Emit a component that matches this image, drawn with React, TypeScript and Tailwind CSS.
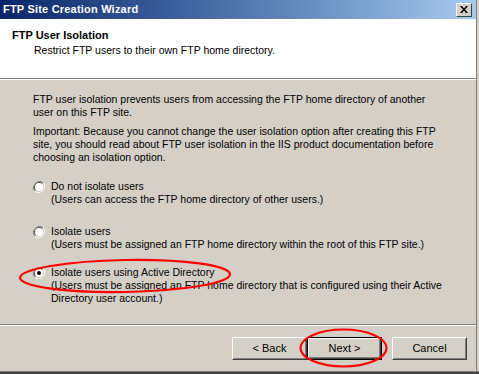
import React from "react";

const font = { fontFamily: '"Liberation Sans", Arial, sans-serif' };

function Radio({ checked }: { checked?: boolean }) {
  return (
    <svg width="12" height="12" viewBox="0 0 12 12" className="shrink-0">
      <path d="M10.2 1.8 A6 6 0 0 0 1.8 10.2" fill="none" stroke="#808080" strokeWidth="1" />
      <path d="M9.5 2.5 A5 5 0 0 0 2.5 9.5" fill="none" stroke="#404040" strokeWidth="1" />
      <path d="M1.8 10.2 A6 6 0 0 0 10.2 1.8" fill="none" stroke="#ffffff" strokeWidth="1" />
      <path d="M2.5 9.5 A5 5 0 0 0 9.5 2.5" fill="none" stroke="#d4d0c8" strokeWidth="1" />
      <circle cx="6" cy="6" r="4" fill="#ffffff" />
      {checked && <circle cx="6" cy="6" r="2" fill="#000000" />}
    </svg>
  );
}

function Btn({ label, def }: { label: string; def?: boolean }) {
  return (
    <div className={`w-[75px] h-[23px] ${def ? "border border-black" : ""}`}>
      <div className="w-full h-full border border-t-white border-l-white border-b-[#404040] border-r-[#404040]">
        <div className="w-full h-full border border-t-[#d4d0c8] border-l-[#d4d0c8] border-b-[#808080] border-r-[#808080] flex items-center justify-center text-[11px] text-black">
          {label}
        </div>
      </div>
    </div>
  );
}

export default function App() {
  return (
    <div className="relative w-[479px] h-[374px] overflow-hidden bg-[#d4d0c8] text-black" style={font}>
      <div className="flex flex-col w-[476px] h-[371px]">
        {/* Title bar */}
        <div className="h-[19px] shrink-0 flex items-center justify-between pl-[3px] pr-[4px] bg-gradient-to-r from-[#0a246a] to-[#a6caf0]">
          <span className="text-white font-bold text-[11px] leading-none tracking-[0.2px]">FTP Site Creation Wizard</span>
          <div className="w-[16px] h-[14px] bg-[#d4d0c8] border border-t-white border-l-white border-b-[#404040] border-r-[#404040] flex items-center justify-center">
            <svg width="8" height="7" viewBox="0 0 8 7">
              <path d="M0 0h2l2 2.5L6 0h2L5 3.5 8 7H6L4 4.5 2 7H0l3-3.5z" fill="#000" />
            </svg>
          </div>
        </div>
        {/* Header */}
        <div className="h-[59px] shrink-0 bg-white pl-[12px] pt-[10px]">
          <div className="text-[11px] font-bold leading-[13px]">FTP User Isolation</div>
          <div className="text-[10.5px] leading-[13px] pl-[22px] mt-[2px]">Restrict FTP users to their own FTP home directory.</div>
        </div>
        <div className="h-px bg-[#808080] shrink-0" />
        <div className="h-px bg-white shrink-0" />
        {/* Body */}
        <div className="flex-1 pl-[33px] pt-[13px] text-[10.5px] leading-[13px] whitespace-nowrap">
          <p>
            FTP user isolation prevents users from accessing the FTP home directory of another
            <br />
            user on this FTP site.
          </p>
          <p className="mt-[6px]">
            Important: Because you cannot change the user isolation option after creating this FTP
            <br />
            site, you should read about FTP user isolation in the IIS product documentation before
            <br />
            choosing an isolation option.
          </p>
          <div className="mt-[16px] flex gap-[6px]">
            <div className="pt-px"><Radio /></div>
            <div>
              <div>Do not isolate users</div>
              <div>(Users can access the FTP home directory of other users.)</div>
            </div>
          </div>
          <div className="mt-[19px] flex gap-[6px]">
            <div className="pt-px"><Radio /></div>
            <div>
              <div>Isolate users</div>
              <div>(Users must be assigned an FTP home directory within the root of this FTP site.)</div>
            </div>
          </div>
          <div className="mt-[15px] flex gap-[6px]">
            <div className="pt-px"><Radio checked /></div>
            <div>
              <div>Isolate users using Active Directory</div>
              <div>
                (Users must be assigned an FTP home directory that is configured using their Active
                <br />
                Directory user account.)
              </div>
            </div>
          </div>
        </div>
        <div className="h-px bg-[#808080] shrink-0" />
        <div className="h-px bg-white shrink-0" />
        {/* Footer */}
        <div className="h-[45px] shrink-0 flex items-start pt-[11px] pl-[232px]">
          <Btn label="< Back" />
          <Btn label="Next >" def />
          <div className="w-[10px]" />
          <Btn label="Cancel" />
        </div>
      </div>
      {/* Window frame edges */}
      <div className="absolute top-0 right-0 w-[3px] h-full bg-[#d4d0c8] border-l border-[#808080]" />
      <div className="absolute left-0 bottom-0 w-full h-[3px] bg-[#404040] border-t border-[#808080]" />
      {/* Red annotation ellipses */}
      <svg className="absolute inset-0 pointer-events-none" width="479" height="374">
        <ellipse cx="125" cy="276" rx="105" ry="16" fill="none" stroke="#ff0000" strokeWidth="2.2" transform="rotate(-1 125 276)" />
        <ellipse cx="343.5" cy="348" rx="43" ry="18.5" fill="none" stroke="#ff0000" strokeWidth="2.2" />
      </svg>
    </div>
  );
}
